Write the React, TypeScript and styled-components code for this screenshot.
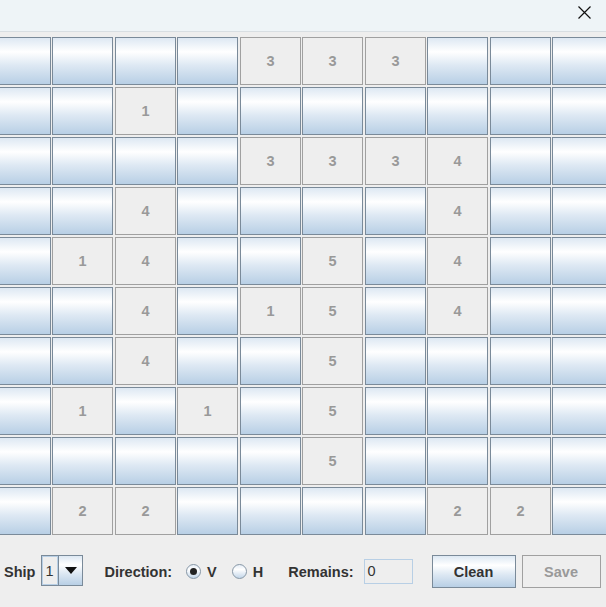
import React, { useState } from "react";
import styled, { createGlobalStyle, css } from "styled-components";

const GlobalStyle = createGlobalStyle`
  html, body {
    margin: 0;
    padding: 0;
    background: #eeeeee;
    overflow: hidden;
  }
  body {
    font-family: "Liberation Sans", Arial, sans-serif;
  }
`;

const FONT = `"Liberation Sans", Arial, sans-serif`;

const Window = styled.div`
  width: 606px;
  height: 607px;
  display: flex;
  flex-direction: column;
  background: #eeeeee;
  overflow: hidden;
`;

const TitleBar = styled.div`
  height: 31px;
  flex: none;
  background: #eef4f7;
  border-bottom: 1px solid #d8dee2;
  display: flex;
  justify-content: flex-end;
  align-items: flex-start;
`;

const CloseButton = styled.div`
  width: 13px;
  height: 13px;
  margin: 6px 15px 0 0;
  display: flex;
`;

const Board = styled.div`
  flex: none;
  margin: 5px 0 0 -10px;
  display: grid;
  grid-template-columns: repeat(5, 62px 63px);
  grid-template-rows: repeat(10, 48px);
  row-gap: 2px;
  width: 625px;
`;

const blueGradient = css`
  background: linear-gradient(
    to bottom,
    #dde8f3 0%,
    #ffffff 30%,
    #dde8f3 60%,
    #b8cfe5 100%
  );
`;

const Cell = styled.div<{ $revealed: boolean }>`
  width: 61px;
  height: 48px;
  box-sizing: border-box;
  display: flex;
  align-items: center;
  justify-content: center;
  font-family: ${FONT};
  font-weight: bold;
  font-size: 14.5px;
  color: #999999;
  ${(p) =>
    p.$revealed
      ? css`
          background: #eeeeee;
          border: 1px solid #a0a0a0;
        `
      : css`
          ${blueGradient};
          border: 1px solid #7a8a99;
        `}
`;

const ControlBar = styled.div`
  flex: none;
  height: 72px;
  display: flex;
  align-items: center;
  padding-left: 4px;
  padding-top: 1px;
  box-sizing: border-box;
  font-family: ${FONT};
  font-size: 14.5px;
  color: #333333;
`;

const Label = styled.span<{ $ml?: number }>`
  font-weight: bold;
  color: #333333;
  margin-left: ${(p) => p.$ml ?? 0}px;
  white-space: nowrap;
`;

const Combo = styled.div`
  margin-left: 6px;
  width: 42px;
  height: 31px;
  box-sizing: border-box;
  border: 1px solid #7a8a99;
  display: flex;
  margin-top: -2px;
`;

const ComboValue = styled.div`
  width: 16px;
  box-sizing: border-box;
  border: 1px solid #b8cfe5;
  background: #eeeeee;
  display: flex;
  align-items: center;
  padding-left: 2px;
  font-weight: normal;
  color: #333333;
`;

const ComboArrow = styled.div`
  flex: 1;
  border-left: 1px solid #7a8a99;
  ${blueGradient};
  display: flex;
  align-items: center;
  justify-content: center;
`;

const RadioGroup = styled.label<{ $ml: number }>`
  display: flex;
  align-items: center;
  margin-left: ${(p) => p.$ml}px;
`;

const RadioCircle = styled.span<{ $checked: boolean }>`
  width: 15px;
  height: 15px;
  box-sizing: border-box;
  border-radius: 50%;
  border: 1px solid #8797a6;
  background: linear-gradient(to bottom, #e6eef6 0%, #ffffff 35%, #c3d6e9 100%);
  display: flex;
  align-items: center;
  justify-content: center;
  margin-right: 6px;
  margin-top: -1px;
  &::after {
    content: "";
    width: 7px;
    height: 7px;
    border-radius: 50%;
    background: #222222;
    display: ${(p) => (p.$checked ? "block" : "none")};
  }
`;

const Field = styled.div`
  margin-left: 10px;
  width: 49px;
  height: 25px;
  box-sizing: border-box;
  border: 1px solid #b8cfe5;
  background: #eeeeee;
  display: flex;
  align-items: center;
  padding-left: 3px;
  color: #333333;
  margin-top: -1px;
`;

const Button = styled.div<{ $disabled?: boolean; $ml: number; $w: number }>`
  margin-left: ${(p) => p.$ml}px;
  width: ${(p) => p.$w}px;
  height: 33px;
  box-sizing: border-box;
  display: flex;
  align-items: center;
  justify-content: center;
  font-weight: bold;
  ${(p) =>
    p.$disabled
      ? css`
          border: 1px solid #a0a0a0;
          background: #eeeeee;
          color: #999999;
        `
      : css`
          border: 1px solid #7a8a99;
          ${blueGradient};
          color: #333333;
        `}
`;

const BOARD: (number | null)[][] = [
  [null, null, null, null, 3, 3, 3, null, null, null],
  [null, null, 1, null, null, null, null, null, null, null],
  [null, null, null, null, 3, 3, 3, 4, null, null],
  [null, null, 4, null, null, null, null, 4, null, null],
  [null, 1, 4, null, null, 5, null, 4, null, null],
  [null, null, 4, null, 1, 5, null, 4, null, null],
  [null, null, 4, null, null, 5, null, null, null, null],
  [null, 1, null, 1, null, 5, null, null, null, null],
  [null, null, null, null, null, 5, null, null, null, null],
  [null, 2, 2, null, null, null, null, 2, 2, null],
];

export default function App() {
  const [dir, setDir] = useState<"V" | "H">("V");
  return (
    <>
      <GlobalStyle />
      <Window>
        <TitleBar>
          <CloseButton>
            <svg width="13" height="13" viewBox="0 0 13 13">
              <path d="M0.5 0.5 L12.5 12.5 M12.5 0.5 L0.5 12.5" stroke="#111" strokeWidth="1.2" fill="none" />
            </svg>
          </CloseButton>
        </TitleBar>
        <Board>
          {BOARD.map((row, r) =>
            row.map((v, c) => (
              <Cell key={`${r}-${c}`} $revealed={v !== null}>
                {v ?? ""}
              </Cell>
            ))
          )}
        </Board>
        <ControlBar>
          <Label>Ship</Label>
          <Combo>
            <ComboValue>1</ComboValue>
            <ComboArrow>
              <svg width="12" height="7" viewBox="0 0 12 7">
                <path d="M0 0 L12 0 L6 7 Z" fill="#111" />
              </svg>
            </ComboArrow>
          </Combo>
          <Label $ml={21}>Direction:</Label>
          <RadioGroup $ml={14} onClick={() => setDir("V")}>
            <RadioCircle $checked={dir === "V"} />
            <Label>V</Label>
          </RadioGroup>
          <RadioGroup $ml={15} onClick={() => setDir("H")}>
            <RadioCircle $checked={dir === "H"} />
            <Label>H</Label>
          </RadioGroup>
          <Label $ml={25}>Remains:</Label>
          <Field>0</Field>
          <Button $ml={19} $w={84}>Clean</Button>
          <Button $ml={6} $w={79} $disabled>
            Save
          </Button>
        </ControlBar>
      </Window>
    </>
  );
}
